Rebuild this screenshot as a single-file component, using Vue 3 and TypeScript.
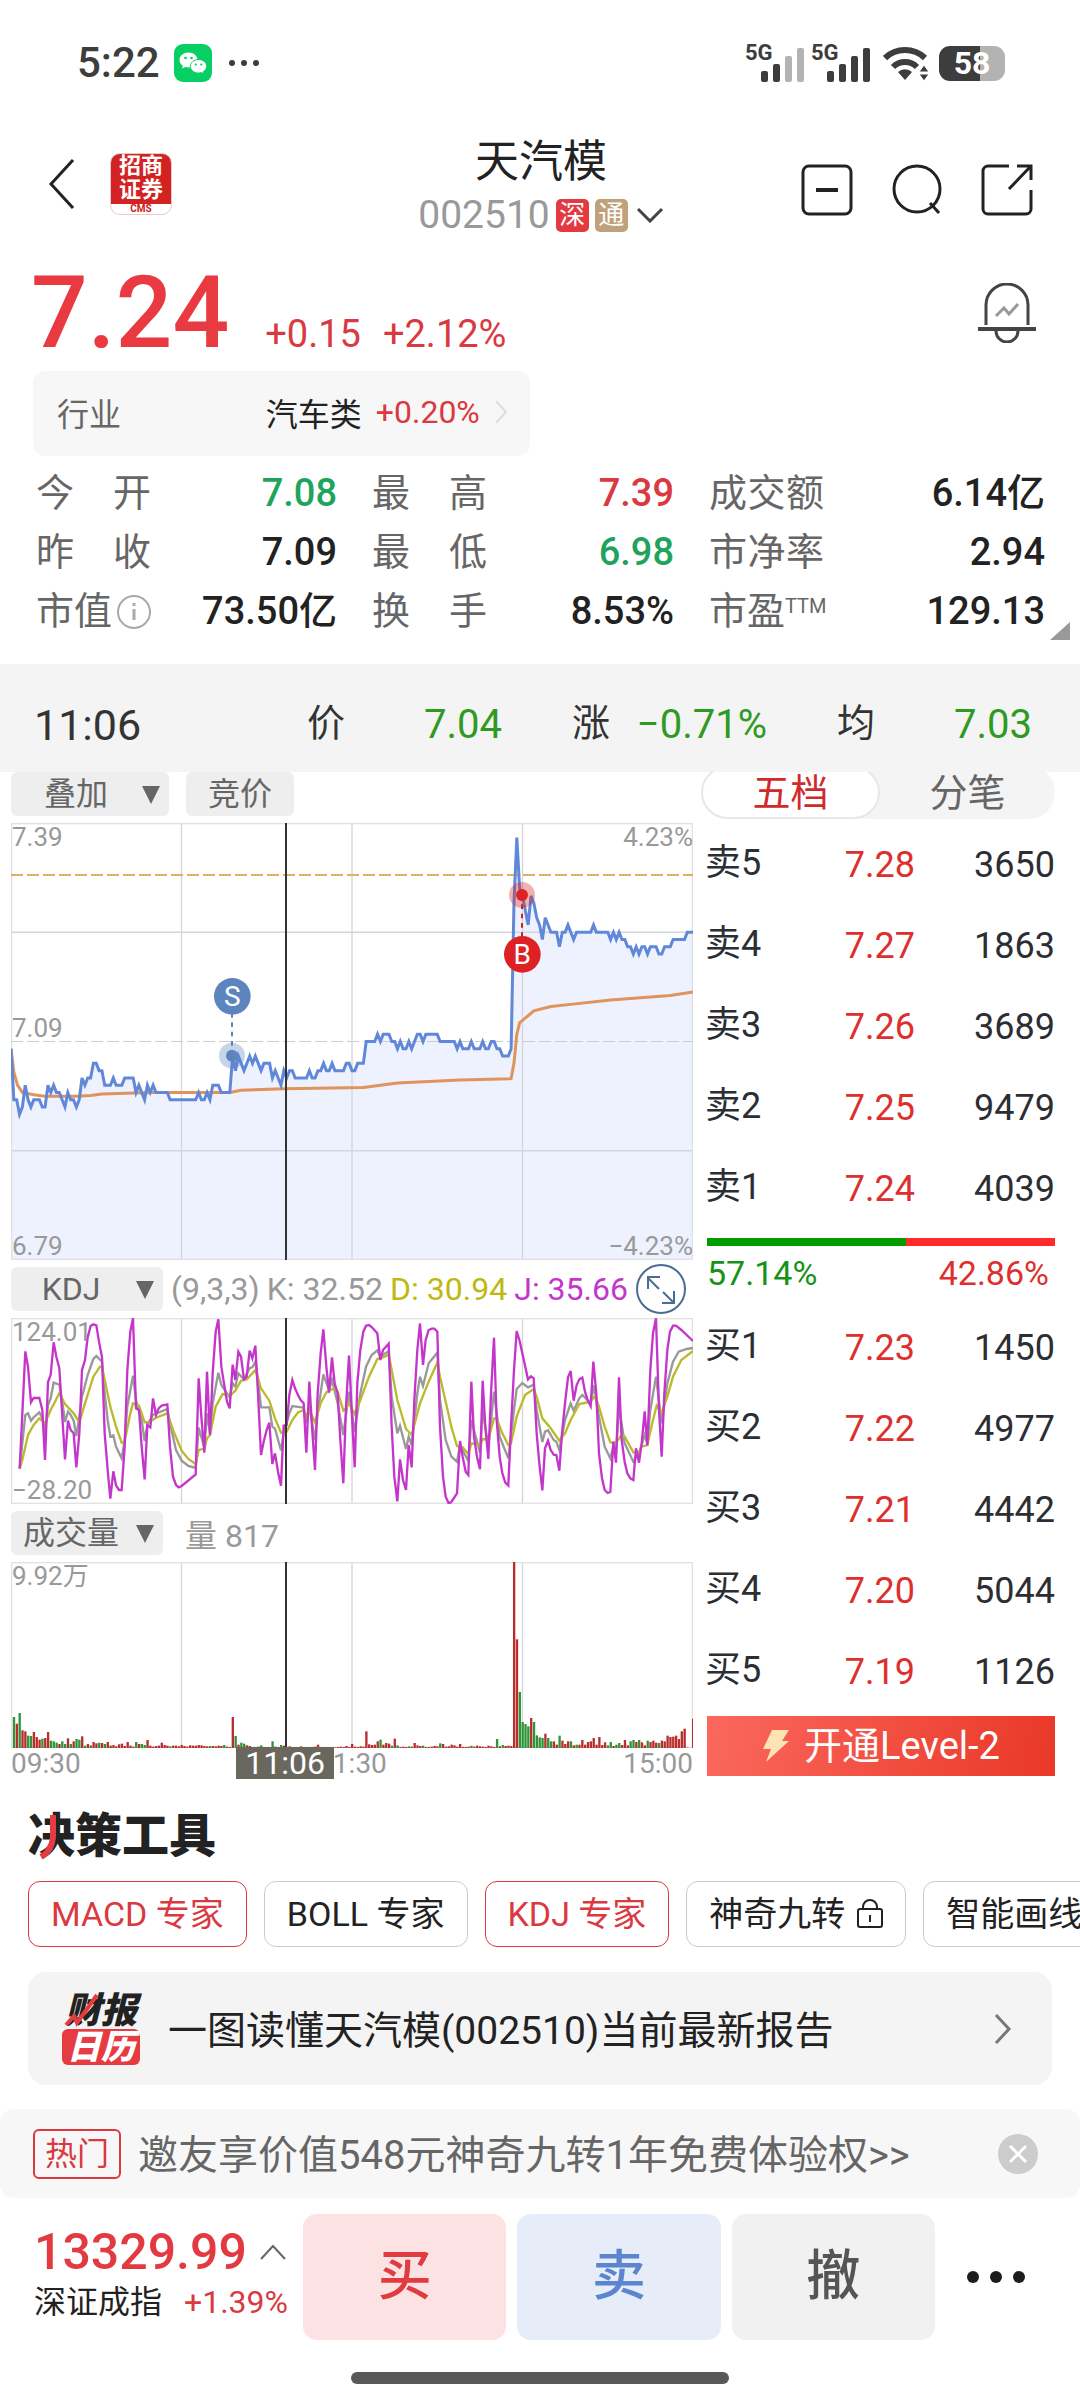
<script setup lang="ts">
import { computed, ref } from 'vue'

type Tone = 'up' | 'down' | 'plain'
interface Stat { label: string; value: string; tone: Tone; info?: boolean; sup?: string }
interface Level { side: string; price: string; qty: number }
interface Tool { name: string; active?: boolean; locked?: boolean }

const stats: Stat[] = [
  { label: '今开', value: '7.08', tone: 'down' },
  { label: '最高', value: '7.39', tone: 'up' },
  { label: '成交额', value: '6.14亿', tone: 'plain' },
  { label: '昨收', value: '7.09', tone: 'plain' },
  { label: '最低', value: '6.98', tone: 'down' },
  { label: '市净率', value: '2.94', tone: 'plain' },
  { label: '市值', value: '73.50亿', tone: 'plain', info: true },
  { label: '换手', value: '8.53%', tone: 'plain' },
  { label: '市盈', value: '129.13', tone: 'plain', sup: 'TTM' },
]

const readout = [
  { label: '价', value: '7.04' },
  { label: '涨', value: '−0.71%' },
  { label: '均', value: '7.03' },
]

const asks: Level[] = [
  { side: '卖5', price: '7.28', qty: 3650 },
  { side: '卖4', price: '7.27', qty: 1863 },
  { side: '卖3', price: '7.26', qty: 3689 },
  { side: '卖2', price: '7.25', qty: 9479 },
  { side: '卖1', price: '7.24', qty: 4039 },
]
const bids: Level[] = [
  { side: '买1', price: '7.23', qty: 1450 },
  { side: '买2', price: '7.22', qty: 4977 },
  { side: '买3', price: '7.21', qty: 4442 },
  { side: '买4', price: '7.20', qty: 5044 },
  { side: '买5', price: '7.19', qty: 1126 },
]
const sellShare = 57.14

const tools: Tool[] = [
  { name: 'MACD 专家', active: true },
  { name: 'BOLL 专家' },
  { name: 'KDJ 专家', active: true },
  { name: '神奇九转', locked: true },
  { name: '智能画线' },
]

const bookTab = ref<'five' | 'ticks'>('five')

/* Chart geometry: 240 trading minutes across, prices 6.79 to 7.39 */
const W = 2046
const H = 1311
const SUB = 558
const crossX = 825
const minuteX = (m: number) => (m / 240) * W
const centY = (c: number) => ((739 - c) / 60) * H

/* Minute prices, in cents above 7.00 */
const price = [
  8, 1, 1, -1, 0, 3, 1, 0, 1, 1, 1, 0, 0, 3, 2, 3, 2, 2, 1, 0, 2, 1, 1, 0, 1, 4, 3, 4, 4, 6,
  6, 5, 5, 3, 3, 3, 4, 3, 3, 3, 4, 4, 4, 4, 2, 3, 2, 1, 3, 2, 3, 2, 2, 2, 2, 2, 1, 1, 1, 1,
  1, 1, 1, 1, 1, 1, 2, 1, 1, 2, 1, 3, 3, 3, 2, 2, 2, 2, 7, 5, 7, 6, 5, 6, 7, 6, 7, 6, 5, 6,
  6, 6, 4, 5, 4, 3, 5, 4, 5, 5, 4, 4, 4, 4, 4, 5, 4, 4, 5, 5, 6, 5, 5, 6, 5, 5, 5, 5, 6, 6,
  5, 5, 6, 6, 6, 9, 9, 9, 9, 10, 9, 10, 10, 10, 9, 9, 8, 9, 8, 8, 9, 8, 9, 10, 10, 9, 10, 10, 10, 10,
  10, 9, 9, 9, 9, 9, 9, 8, 9, 8, 8, 8, 9, 8, 8, 8, 9, 8, 8, 9, 9, 8, 8, 7, 7, 7, 8, 28, 37, 30,
  29, 27, 25, 29, 28, 26, 25, 23, 26, 25, 24, 24, 24, 22, 24, 24, 25, 24, 23, 24, 24, 24, 24, 24, 24, 25, 24, 24, 24, 24,
  24, 23, 24, 23, 24, 23, 23, 22, 22, 21, 22, 21, 22, 22, 21, 22, 22, 22, 21, 21, 22, 22, 22, 23, 23, 23, 23, 23, 24, 24, 24,
]
const pricePoints = computed(() =>
  price.map((c, m) => `${minuteX(m).toFixed(1)},${centY(700 + c).toFixed(1)}`).join(' '))
const priceArea = computed(() => `0,${H} ${pricePoints.value} ${W},${H}`)

const average: [number, number][] = [
  [0, 708], [1, 704.8], [2.3, 703], [4, 702], [8, 701.7], [12, 701.5], [23, 701.5], [28, 701.6], [32, 701.8],
  [49, 702], [77, 702], [81, 702.3], [96, 702.5], [124, 702.7], [136, 703.3], [158, 703.7], [176, 703.9],
  [177, 706], [178, 710], [179, 711.6], [180, 711.9], [184, 713.2], [190, 713.8], [197, 714.1], [211, 714.7],
  [225, 715.1], [232, 715.3], [240, 715.8],
]
const averagePoints = average.map(([m, c]) => `${minuteX(m).toFixed(1)},${centY(c).toFixed(1)}`).join(' ')

const jLine = '59,626 76,274 84,320 93,427 101,414 118,414 127,450 135,600 144,366 152,345 161,247 169,290 178,325 195,598 204,482 212,510 221,520 229,622 238,520 246,330 255,300 263,232 272,198 280,193 289,196 297,245 306,292 314,520 323,630 331,716 340,634 348,676 357,690 365,690 374,560 382,330 391,215 399,174 408,445 417,450 425,560 434,658 442,495 451,502 459,415 468,465 476,445 485,437 502,433 510,560 519,650 528,675 536,682 545,678 587,643 596,355 604,470 613,578 621,335 630,525 638,340 647,215 655,178 664,320 672,370 681,425 689,445 698,314 706,360 715,275 723,290 732,358 740,350 749,272 757,295 766,257 774,400 783,585 791,545 800,510 808,488 817,612 825,580 834,635 843,677 851,497 860,495 868,405 877,360 885,385 894,405 902,420 911,430 919,578 928,365 936,500 945,630 953,400 962,280 970,208 979,320 987,398 996,292 1004,370 1013,400 1021,540 1030,670 1038,440 1047,287 1056,470 1064,622 1072,370 1081,270 1090,215 1098,197 1107,195 1115,201 1132,220 1141,300 1149,270 1166,251 1175,500 1183,650 1192,724 1200,598 1209,660 1218,690 1226,555 1235,622 1243,420 1252,270 1260,190 1269,315 1277,240 1286,210 1295,206 1303,206 1312,215 1320,500 1329,650 1337,710 1346,730 1354,726 1371,700 1380,543 1388,590 1397,635 1405,645 1414,365 1422,530 1431,590 1440,628 1448,362 1456,500 1465,597 1473,400 1482,233 1490,480 1499,590 1507,640 1516,668 1525,677 1533,500 1542,330 1550,213 1559,243 1584,358 1593,349 1601,355 1610,520 1618,610 1627,691 1635,565 1644,542 1652,570 1661,584 1669,585 1678,632 1686,520 1695,430 1704,352 1712,333 1721,422 1730,375 1738,358 1747,353 1755,395 1763,420 1772,438 1780,305 1789,400 1797,580 1806,655 1814,690 1823,699 1831,696 1840,545 1848,608 1857,352 1865,540 1874,605 1882,640 1891,655 1900,660 1908,565 1917,608 1925,550 1934,454 1942,556 1951,330 1959,220 1968,175 1977,450 1985,590 1993,400 2002,270 2010,215 2019,197 2028,197 2044,210 2079,243'
const kLine = '59,626 67,550 76,465 84,460 93,482 101,472 118,457 127,475 135,520 144,435 152,415 161,368 178,374 186,420 195,486 204,455 212,465 221,482 229,528 238,470 246,410 263,345 280,297 289,288 306,305 314,400 323,480 331,530 340,526 348,560 365,595 374,540 382,440 399,347 408,420 425,480 434,543 442,495 459,465 502,447 510,490 528,570 545,602 565,618 587,624 596,503 613,562 621,460 630,520 638,430 655,338 664,375 689,412 698,370 706,380 715,340 732,358 749,324 757,322 766,305 774,360 783,442 808,442 817,500 825,506 843,571 851,520 868,460 877,438 911,443 919,490 928,440 945,540 953,460 970,343 987,390 996,360 1013,430 1030,525 1047,395 1064,515 1081,400 1098,320 1115,285 1132,271 1141,290 1166,273 1175,410 1192,520 1200,497 1218,567 1226,530 1235,555 1252,400 1260,350 1269,378 1286,310 1312,278 1320,420 1337,540 1354,590 1371,605 1380,556 1405,603 1414,480 1440,578 1448,450 1465,560 1482,395 1499,530 1525,595 1542,450 1550,387 1567,369 1584,382 1601,374 1610,450 1627,546 1635,515 1644,511 1661,540 1669,545 1678,570 1695,480 1712,430 1721,452 1738,415 1747,405 1772,430 1780,375 1797,470 1814,560 1831,595 1840,560 1848,580 1857,440 1874,550 1900,605 1917,580 1934,525 1942,550 1951,450 1968,350 1985,490 2002,370 2019,305 2036,275 2060,267 2079,264'
const dLine = '59,626 67,600 76,560 84,525 101,495 118,475 135,490 152,450 178,400 195,432 221,460 238,487 255,430 280,350 300,320 306,320 331,440 348,500 365,548 374,545 391,460 399,430 417,437 434,487 451,485 468,473 502,460 519,510 545,572 565,597 587,612 596,570 604,568 613,567 621,535 630,525 647,440 668,402 689,408 706,392 723,362 740,358 766,330 783,385 808,422 825,475 843,518 860,515 877,480 894,457 911,450 919,468 928,450 945,487 962,430 979,397 1004,384 1013,395 1030,452 1038,445 1047,430 1064,462 1081,420 1107,350 1132,297 1149,292 1166,284 1175,330 1192,420 1218,507 1235,525 1260,430 1286,365 1312,308 1320,350 1354,500 1371,558 1388,562 1405,582 1414,550 1431,553 1440,560 1448,537 1465,538 1482,475 1490,475 1507,520 1525,555 1533,550 1550,470 1575,405 1601,387 1610,410 1627,475 1652,505 1678,542 1695,520 1712,480 1738,432 1772,425 1785,407 1797,440 1814,500 1831,547 1848,548 1865,525 1874,530 1900,577 1917,577 1925,560 1942,555 1959,480 1970,437 1985,458 2002,410 2019,350 2044,300 2079,273'

/* Minute volumes: positive bars rise (red), negative bars fall (green) */
const volume = [
  0, -93, 73, -105, 53, 50, -37, -36, 48, 33, 25, -28, 30, 48, -22, -20, -16, 12, -20, -12, 29, -12, 20, -27, -25, 35, -7, 12, -8, 18, 14, -16, 15, -12, 18, 7,
  9, 5, 11, 13, 6, 18, 7, 4, -18, 12, -12, -9, 24, 7, 4, 6, 7, 16, 9, 7, -5, 7, 7, 5, 9, 6, 4, 8, 7, 7, 9, 8, 6, 5, -6, 6, 5, 7, 6, -9, 4, 3,
  93, -36, 10, -16, -13, 8, 6, 3, -3, 4, -8, 3, 2, 3, -20, 4, 3, -9, 7, -3, 5, 2, 3, 2, 5, 2, 2, 3, 2, 4,
  10, 2, -3, 2, 2, -2, 2, 3, 4, 3, 6, 3, 12, 4, 3, 5, 4, 50, 11, 9, 10, 20, -25, 10, 15, 13, -7, 28, -8, 3, 4, 3, -5, 4,
  15, 8, 6, -7, 3, 3, 4, 6, 5, -14, 12, 4, 5, 10, 8, 4, 12, 3, 3, 4, -7, 4, 7, 5, 4, 3, 7, 5, 3, -27, 5, -9, 6, 7, 6,
  558, 326, -168, -78, -72, -65, 90, -78, -38, -32, -30, 43, -30, -20, 20, 10, -37, 22, 12, 20, -20, 8, -10, 10, 24, 10, 18, 20, 30, 10,
  33, 9, 17, -8, -18, 6, -10, -15, 9, 24, 8, -20, -24, 18, -24, 17, 8, -22, 18, 22, 16, -15, 22, 20, 37, 33, 34, 37, 27, 50, 58, 1, 0, 88,
]
const gridX = [W / 4, W / 2, (W * 3) / 4]
const gridY = [H / 4, (H * 3) / 4]
</script>

<template>
  <div class="page">
    <div class="status">
      <div class="status-left">
        <span class="clock">5:22</span>
        <svg class="wechat" viewBox="0 0 38 38" aria-hidden="true">
          <rect width="38" height="38" rx="9" fill="#07cf64" />
          <path d="M14.500 8.500c-5 0-9 3.300-9 7.500 0 2.300 1.300 4.400 3.300 5.800l-.8 2.700 3.200-1.600c1 .3 2.100.5 3.300.5 5 0 9-3.300 9-7.400s-4-7.500-9-7.500z" fill="#fff" />
          <path d="M24.500 15.500c-4.500 0-8.200 3-8.200 6.800s3.700 6.800 8.200 6.800c1 0 2-.2 2.900-.5l2.700 1.400-.7-2.400c2-1.200 3.300-3.100 3.300-5.300 0-3.800-3.700-6.800-8.200-6.800z" fill="#fff" stroke="#07cf64" />
          <g fill="#07cf64"><circle cx="11.500" cy="14" r="1.300" /><circle cx="17.500" cy="14" r="1.300" /><circle cx="21.800" cy="20.500" r="1.100" /><circle cx="27.200" cy="20.500" r="1.100" /></g>
        </svg>
        <svg class="mini-dots" viewBox="0 0 32 8" aria-hidden="true"><g fill="#3d3d3d"><circle cx="4" cy="4" r="3" /><circle cx="16" cy="4" r="3" /><circle cx="28" cy="4" r="3" /></g></svg>
      </div>
      <div class="status-right">
        <div class="signal">
          <span>5G</span>
          <svg viewBox="0 0 44 36" aria-hidden="true"><g fill="#3d3d3d"><rect y="24" width="7" height="11" rx="2" /><rect x="12" y="17" width="7" height="18" rx="2" /></g><g fill="#b3b3b3"><rect x="24" y="9" width="7" height="26" rx="2" /><rect x="36" y="1" width="7" height="34" rx="2" /></g></svg>
        </div>
        <div class="signal">
          <span>5G</span>
          <svg viewBox="0 0 44 36" aria-hidden="true"><g fill="#3d3d3d"><rect y="24" width="7" height="11" rx="2" /><rect x="12" y="17" width="7" height="18" rx="2" /><rect x="24" y="9" width="7" height="26" rx="2" /><rect x="36" y="1" width="7" height="34" rx="2" /></g></svg>
        </div>
        <svg class="wifi" viewBox="0 0 46 36" aria-hidden="true">
          <g fill="none" stroke="#3d3d3d" stroke-width="6"><path d="M2 13a29 29 0 0 1 40 0" /><path d="M10 22a17 17 0 0 1 24 0" /></g>
          <path d="M15 27a10 10 0 0 1 14 0l-7 8z" fill="#3d3d3d" />
          <path d="M41 20l5 7h-10zM41 36l5-7h-10z" fill="#3d3d3d" stroke="#fff" stroke-width="1" />
        </svg>
        <div class="battery"><span>58</span></div>
      </div>
    </div>

    <header class="header">
      <div class="head-left">
        <button class="icon-btn" aria-label="返回">
          <svg class="back" viewBox="0 0 26 50"><path d="M24 1 2 25l22 24" fill="none" stroke="#222" stroke-width="3" /></svg>
        </button>
        <div class="broker"><b>招商</b><b>证券</b><i>CMS</i></div>
      </div>
      <div class="head-mid">
        <h1>天汽模</h1>
        <div class="code">
          <span>002510</span>
          <em class="tag red">深</em>
          <em class="tag tan">通</em>
          <svg viewBox="0 0 28 16" aria-hidden="true"><path d="M2 2l12 12L26 2" fill="none" stroke="#444" stroke-width="3" /></svg>
        </div>
      </div>
      <div class="head-right">
        <button class="icon-btn" aria-label="移除自选">
          <svg viewBox="0 0 52 52"><rect x="2" y="2" width="48" height="48" rx="6" fill="none" stroke="#222" stroke-width="3" /><path d="M15 26h22" stroke="#222" stroke-width="4" /></svg>
        </button>
        <button class="icon-btn" aria-label="搜索">
          <svg viewBox="0 0 52 52"><circle cx="26" cy="25" r="23" fill="none" stroke="#222" stroke-width="3" /><path d="M39 39l9 10" stroke="#222" stroke-width="3" /></svg>
        </button>
        <button class="icon-btn" aria-label="分享">
          <svg viewBox="0 0 52 52"><g fill="none" stroke="#222" stroke-width="3"><path d="M28 2H7a5 5 0 0 0-5 5v38a5 5 0 0 0 5 5h38a5 5 0 0 0 5-5V26" /><path d="M36 2h14v14M50 2 28 25" /></g></svg>
        </button>
      </div>
    </header>

    <section class="quote">
      <strong>7.24</strong>
      <span>+0.15</span>
      <span>+2.12%</span>
      <button class="icon-btn bell" aria-label="股价提醒">
        <svg viewBox="0 0 58 60"><g fill="none" stroke="#444" stroke-width="3"><path d="M8 42V22a21 21 0 0 1 42 0v20" /><path d="M0 46h58" stroke-width="4" /><path d="M18 48a11 11 0 0 0 22 0" /></g><path d="M18 33l8-8 5 6 9-10" fill="none" stroke="#999" stroke-width="3" /></svg>
      </button>
    </section>

    <a class="industry" href="#industry">
      <span class="ind-label">行业</span>
      <span class="ind-name">汽车类</span>
      <span class="ind-chg">+0.20%</span>
      <svg viewBox="0 0 14 26" aria-hidden="true"><path d="M2 2l10 11L2 24" fill="none" stroke="#ddd" stroke-width="2" /></svg>
    </a>

    <dl class="stats">
      <div v-for="s in stats" :key="s.label">
        <dt :class="{ packed: s.info || s.sup }">
          <template v-if="s.info || s.sup">{{ s.label }}</template>
          <template v-else><span v-for="ch in s.label" :key="ch">{{ ch }}</span></template>
          <svg v-if="s.info" viewBox="0 0 36 36" aria-hidden="true"><circle cx="18" cy="18" r="16" fill="none" stroke="#aaa" stroke-width="2" /><path d="M18 15v11M18 9v3" stroke="#aaa" stroke-width="3" /></svg>
          <sup v-if="s.sup">{{ s.sup }}</sup>
        </dt>
        <dd :class="s.tone">{{ s.value }}</dd>
      </div>
    </dl>

    <div class="readout">
      <time>11:06</time>
      <div v-for="r in readout" :key="r.label"><span>{{ r.label }}</span><b>{{ r.value }}</b></div>
    </div>

    <main class="board">
      <div class="charts">
        <div class="bar">
          <label class="pick wide">
            <select aria-label="叠加"><option>叠加</option></select>
            <svg viewBox="0 0 18 18" aria-hidden="true"><path d="M0 0h18L9 18z" fill="#666" /></svg>
          </label>
          <button class="chip">竞价</button>
        </div>
        <div class="plot">
          <svg :viewBox="`0 0 ${W} ${H}`" role="img" aria-label="分时走势">
            <polygon :points="priceArea" fill="#eef2fe" />
            <g stroke="#d3d5dc" stroke-width="4">
              <path v-for="x in gridX" :key="x" :d="`M${x} 0V${H}`" />
              <path v-for="y in gridY" :key="y" :d="`M0 ${y}H${W}`" />
            </g>
            <rect x="2" y="2" :width="W - 4" :height="H - 4" fill="none" stroke="#dfe1e6" stroke-width="4" />
            <path :d="`M0 ${H / 2}H${W}`" stroke="#ccc" stroke-width="3" stroke-dasharray="36 12" />
            <path :d="`M0 156H${W}`" stroke="#e2b062" stroke-width="6" stroke-dasharray="36 12" />
            <polyline :points="averagePoints" fill="none" stroke="#e0935a" stroke-width="9" />
            <polyline :points="pricePoints" fill="none" stroke="#6188d8" stroke-width="9" />
            <path :d="`M${crossX} 0V${H}`" stroke="#333" stroke-width="6" />
            <g>
              <path d="M663 570V698" stroke="#5c85c0" stroke-width="6" stroke-dasharray="14 14" />
              <circle cx="663" cy="698" r="39" fill="#5c85c0" fill-opacity=".35" />
              <circle cx="663" cy="698" r="18" fill="#5c85c0" />
              <circle cx="664" cy="520" r="55" fill="#5c85c0" />
              <text x="664" y="550" class="mark">S</text>
            </g>
            <g>
              <path d="M1533 216V345" stroke="#c22" stroke-width="6" stroke-dasharray="14 14" />
              <circle cx="1533" cy="216" r="39" fill="#de2123" fill-opacity=".35" />
              <circle cx="1533" cy="216" r="18" fill="#de2123" />
              <circle cx="1534" cy="394" r="55" fill="#de2123" />
              <text x="1534" y="424" class="mark">B</text>
            </g>
          </svg>
          <span class="tick tl">7.39</span>
          <span class="tick tr">4.23%</span>
          <span class="tick ml">7.09</span>
          <span class="tick bl">6.79</span>
          <span class="tick br">−4.23%</span>
        </div>

        <div class="bar kdj">
          <label class="pick">
            <select aria-label="指标"><option>KDJ</option></select>
            <svg viewBox="0 0 18 18" aria-hidden="true"><path d="M0 0h18L9 18z" fill="#666" /></svg>
          </label>
          <p><span>(9,3,3)</span><span>K: 32.52</span><span class="d">D: 30.94</span><span class="j">J: 35.66</span></p>
          <button class="icon-btn expand" aria-label="全屏">
            <svg viewBox="0 0 50 50"><g fill="none" stroke="#4a6d94" stroke-width="2"><circle cx="25" cy="25" r="24" /><path d="M23 25 12 14M12 25V13h12M27 28l11 11M38 27v12H26" /></g></svg>
          </button>
        </div>
        <div class="plot">
          <svg :viewBox="`33 174 ${W} ${SUB}`" role="img" aria-label="KDJ">
            <g stroke="#d3d5dc" stroke-width="4"><path v-for="x in gridX" :key="x" :d="`M${x + 33} 174v558`" /></g>
            <rect x="35" y="176" :width="W - 4" :height="SUB - 4" fill="none" stroke="#e2e2e2" stroke-width="4" />
            <g fill="none" stroke-width="7">
              <polyline :points="kLine" stroke="#999" />
              <polyline :points="dLine" stroke="#bcb92c" />
              <polyline :points="jLine" stroke="#c436cb" />
            </g>
            <path :d="`M${crossX + 33} 174v558`" stroke="#333" stroke-width="6" />
          </svg>
          <span class="tick tl">124.01</span>
          <span class="tick bl">−28.20</span>
        </div>

        <div class="bar">
          <label class="pick">
            <select aria-label="副图"><option>成交量</option></select>
            <svg viewBox="0 0 18 18" aria-hidden="true"><path d="M0 0h18L9 18z" fill="#666" /></svg>
          </label>
          <p class="vol">量 817</p>
        </div>
        <div class="plot">
          <svg :viewBox="`0 0 ${W} ${SUB}`" role="img" aria-label="成交量">
            <g stroke="#d3d5dc" stroke-width="4"><path v-for="x in gridX" :key="x" :d="`M${x} 0V${SUB}`" /></g>
            <rect x="2" y="2" :width="W - 4" :height="SUB - 4" fill="none" stroke="#e2e2e2" stroke-width="4" />
            <rect
              v-for="(v, m) in volume" :key="m"
              :x="minuteX(m) - 3" :y="SUB - Math.abs(v)" width="7" :height="Math.abs(v)"
              :fill="v > 0 ? '#b92d2d' : '#2f9438'"
            />
            <path :d="`M${crossX} 0V${SUB}`" stroke="#333" stroke-width="6" />
          </svg>
          <span class="tick tl">9.92万</span>
        </div>
        <div class="axis">
          <span>09:30</span><span>11:30</span><span>15:00</span>
          <time>11:06</time>
        </div>
      </div>

      <aside class="book">
        <div class="tabs">
          <button :class="{ on: bookTab === 'five' }" @click="bookTab = 'five'">五档</button>
          <button :class="{ on: bookTab === 'ticks' }" @click="bookTab = 'ticks'">分笔</button>
        </div>
        <table>
          <tbody><tr v-for="l in asks" :key="l.side"><th scope="row">{{ l.side }}</th><td class="px">{{ l.price }}</td><td>{{ l.qty }}</td></tr></tbody>
        </table>
        <div class="ratio"><i :style="{ width: sellShare + '%' }"></i></div>
        <div class="shares"><span>57.14%</span><span>42.86%</span></div>
        <table>
          <tbody><tr v-for="l in bids" :key="l.side"><th scope="row">{{ l.side }}</th><td class="px">{{ l.price }}</td><td>{{ l.qty }}</td></tr></tbody>
        </table>
        <button class="level2">
          <svg viewBox="0 0 28 32" aria-hidden="true"><path d="M10 0h17l-7 11h7L4 32l5-13H1z" fill="#ffe3b5" /></svg>
          开通Level-2
        </button>
      </aside>
    </main>

    <section class="decide">
      <h2>决策工具
        <svg viewBox="0 0 18 44" aria-hidden="true"><path d="M15 0v22Q14 36 3 42" fill="none" stroke="#e63c41" stroke-width="6" /></svg>
      </h2>
      <div class="tools">
        <button v-for="t in tools" :key="t.name" :class="{ on: t.active }">
          {{ t.name }}
          <svg v-if="t.locked" viewBox="0 0 26 30" aria-hidden="true"><g fill="none" stroke="#222" stroke-width="2"><rect x="1" y="10" width="24" height="18" rx="2" /><path d="M6 10V8a7 7 0 0 1 14 0v2M13 16v7" /></g></svg>
        </button>
      </div>
      <a class="report" href="#report">
        <span class="cal"><b>财报</b><i>日历</i>
          <svg viewBox="0 0 40 36" aria-hidden="true"><path d="M2 32l8-9 3 7L33 2" fill="none" stroke="#e63c41" stroke-width="4" /></svg>
        </span>
        <span class="report-text">一图读懂天汽模(002510)当前最新报告</span>
        <svg class="go" viewBox="0 0 18 32" aria-hidden="true"><path d="M2 2l13 14L2 30" fill="none" stroke="#777" stroke-width="3" /></svg>
      </a>
    </section>

    <div class="promo">
      <em>热门</em>
      <a href="#promo">邀友享价值548元神奇九转1年免费体验权&gt;&gt;</a>
      <button class="icon-btn" aria-label="关闭">
        <svg viewBox="0 0 40 40"><circle cx="20" cy="20" r="20" fill="#ccc" /><path d="M12 12l16 16M28 12 12 28" stroke="#fff" stroke-width="3" /></svg>
      </button>
    </div>

    <footer class="actions">
      <div class="index">
        <div class="idx-top"><strong>13329.99</strong><svg viewBox="0 0 26 16" aria-hidden="true"><path d="M1 15 13 2l12 13" fill="none" stroke="#666" stroke-width="2" /></svg></div>
        <div class="idx-sub"><span>深证成指</span><span class="up">+1.39%</span></div>
      </div>
      <button class="act buy">买</button>
      <button class="act sell">卖</button>
      <button class="act undo">撤</button>
      <button class="icon-btn more" aria-label="更多">
        <svg viewBox="0 0 58 14"><g fill="#1d1d1d"><circle cx="6" cy="7" r="6" /><circle cx="29" cy="7" r="6" /><circle cx="52" cy="7" r="6" /></g></svg>
      </button>
    </footer>
    <div class="home"></div>
  </div>
</template>

<style>
body { margin: 0; background: #fff; }
</style>

<style scoped>
.page { font-family: Roboto, "Noto Sans CJK SC", sans-serif; color: #222; background: #fff; overflow: hidden; }
.page *, .page *::before { box-sizing: border-box; }
button, select { font-family: inherit; border: 0; background: none; padding: 0; margin: 0; color: inherit; }
a { color: inherit; text-decoration: none; }
svg { display: block; flex: none; }
em, i { font-style: normal; }
.up { color: #d9393f; }
.down { color: #1ea45c; }
.icon-btn { display: block; flex: none; }

.status { height: 126px; padding: 0 75px 0 77px; display: flex; justify-content: space-between; align-items: center; }
.status-left, .status-right { display: flex; align-items: center; }
.clock { font-size: 42px; font-weight: 500; color: #3d3d3d; line-height: 48px; }
.wechat { width: 38px; margin-left: 14px; }
.mini-dots { width: 32px; margin-left: 16px; }
.signal { display: flex; align-items: flex-start; height: 40px; margin-right: 6px; color: #3d3d3d; }
.signal span { font-size: 22px; font-weight: 700; line-height: 20px; width: 16px; }
.signal svg { width: 44px; margin-top: 4px; }
.wifi { width: 46px; margin: 0 10px 0 6px; }
.battery { width: 66px; height: 35px; border-radius: 11px; background: linear-gradient(90deg, #3d3d3d 62%, #b3b3b3 62%); color: #fff; font-size: 32px; font-weight: 700; line-height: 35px; text-align: center; }

.header { height: 128px; display: grid; grid-template-columns: 1fr auto 1fr; align-items: center; padding: 0 47px 0 49px; }
.head-left { display: flex; align-items: center; gap: 35px; padding-bottom: 12px; }
.back { width: 26px; }
.broker { width: 62px; height: 62px; border-radius: 10px; background: linear-gradient(#d32222 84%, #fff 84%); border: 1px solid #e9c9c9; display: flex; flex-direction: column; align-items: center; }
.broker b { color: #fff; font-size: 22px; line-height: 24px; font-weight: 700; }
.broker i { color: #c22; font-size: 10px; line-height: 13px; font-weight: 700; }
.head-mid { text-align: center; }
h1 { margin: 0; font-size: 44px; line-height: 50px; font-weight: 400; }
.code { display: flex; align-items: center; gap: 6px; font-size: 39px; line-height: 56px; color: #999; }
.code svg { width: 28px; margin-left: 2px; }
.tag { width: 33px; height: 33px; border-radius: 5px; color: #fff; font-size: 26px; line-height: 33px; text-align: center; }
.red { background: #e23a40; }
.tan { background: #bfa27c; }
.head-right { display: flex; justify-content: flex-end; gap: 38px; }
.head-right svg { width: 52px; }

.quote { display: flex; align-items: baseline; height: 117px; padding: 0 44px 0 31px; color: #d9393f; }
.quote strong { font-size: 100px; line-height: 117px; font-weight: 500; color: #e83a40; margin-right: 36px; }
.quote span { font-size: 38px; margin-right: 22px; }
.bell { margin-left: auto; align-self: center; }
.bell svg { width: 58px; }

.industry { display: flex; align-items: center; width: 46%; height: 85px; margin-left: 33px; padding: 0 22px 4px 24px; background: #f7f7f7; border-radius: 12px; font-size: 32px; }
.ind-label { color: #666; margin-right: auto; }
.ind-name { margin-right: 14px; }
.ind-chg { color: #d9393f; margin-right: 14px; }
.industry svg { width: 14px; }

.stats { position: relative; margin: 8px 0 0; padding: 0 35px 23px 36px; display: grid; grid-template-columns: 301fr 302fr 336fr; column-gap: 35px; }
.stats::before { content: ""; position: absolute; right: 10px; bottom: 24px; border-left: 20px solid transparent; border-bottom: 18px solid #999; }
.stats div { display: flex; justify-content: space-between; align-items: center; height: 59px; font-size: 38px; line-height: 59px; }
.stats dt { display: flex; justify-content: space-between; width: 115px; color: #666; white-space: nowrap; }
.stats dt.packed { justify-content: flex-start; align-items: center; }
.stats dt svg { width: 36px; margin-left: 4px; }
.stats sup { font-size: 20px; line-height: 24px; align-self: flex-start; margin-top: 12px; }
.stats dd { margin: 0; font-weight: 500; white-space: nowrap; }

.readout { position: relative; z-index: 1; display: flex; gap: 70px; align-items: center; height: 108px; padding: 14px 48px 0 34px; background: linear-gradient(#f1f3f5 14px, #f4f4f4 14px); font-size: 38px; color: #333; }
.readout time { flex: 1; font-size: 43px; }
.readout div { flex: none; width: 195px; display: flex; justify-content: space-between; align-items: center; line-height: 48px; }
.readout span { padding-bottom: 4px; }
.readout b { font-size: 40px; font-weight: 400; color: #2f9a22; }

.board { display: grid; grid-template-columns: minmax(0, 682fr) minmax(0, 354fr); gap: 8px; padding: 0 25px 0 11px; }
.bar { display: flex; align-items: center; height: 44px; margin: 7px 0; color: #999; font-size: 32px; }
.bar:first-child { margin-top: 0; }
.bar p { margin: 0; }
.pick { position: relative; width: 152px; height: 44px; }
.pick.wide { width: 158px; }
.pick select { appearance: none; width: 100%; height: 44px; padding: 0 42px 0 14px; border-radius: 6px; background: #eee; color: #666; font-size: 32px; text-align: center; text-align-last: center; }
.pick:not(.wide) select { padding-left: 10px; }
.pick svg { position: absolute; right: 9px; top: 14px; width: 18px; pointer-events: none; }
.chip { height: 44px; width: 108px; margin-left: 17px; border-radius: 6px; background: #eee; color: #666; font-size: 32px; line-height: 44px; }
.kdj p { flex: 1; display: flex; justify-content: space-between; margin: 0 8px; white-space: nowrap; }
.d { color: #bdb911; }
.j { color: #c436cb; }
.expand svg { width: 50px; }
.kdj .expand { margin-right: 7px; }
.bar .vol { margin-left: 22px; }
.plot { position: relative; }
.plot > svg { width: 100%; height: auto; }
.mark { fill: #fff; font-size: 84px; text-anchor: middle; }
.tick { position: absolute; font-size: 26px; line-height: 28px; color: #999; }
.tl { left: 1px; top: 0; }
.tr { right: 0; top: 0; }
.ml { left: 1px; bottom: 50%; }
.bl { left: 1px; bottom: 0; }
.br { right: 0; bottom: 0; }
.axis { position: relative; display: flex; justify-content: space-between; font-size: 28px; line-height: 32px; color: #999; }
.axis time { position: absolute; left: 33%; top: -1px; width: 98px; text-align: center; font-size: 32px; line-height: 32px; color: #fff; background: #6a675f; }

.tabs { display: flex; height: 53px; margin: -6px 0 5px; border-radius: 27px; background: #f4f4f4; }
.tabs button { flex: 1; border-radius: 27px; font-size: 38px; line-height: 50px; color: #666; }
.tabs .on { background: #fff; border: 2px solid #e8e8e8; color: #d02b2b; }
table { width: 100%; border-collapse: collapse; table-layout: fixed; font-size: 36px; line-height: 44px; color: #2b2e33; }
tr { height: 81px; }
th, td { padding: 0; font-weight: 400; text-align: right; vertical-align: middle; }
th { text-align: left; padding: 0 0 4px 4px; }
td.px { color: #de2f2f; padding-right: 22px; }
.ratio { height: 8px; margin: 9px 0 0 6px; background: #ff2a2a; }
.ratio i { display: block; height: 8px; background: #009c00; }
.shares { display: flex; justify-content: space-between; height: 61px; padding: 0 6px 0 6px; font-size: 34px; line-height: 54px; color: #de2f2f; }
.shares span:first-child { color: #149314; }
.level2 { display: flex; align-items: center; justify-content: center; gap: 14px; width: calc(100% - 6px); height: 60px; margin: 4px 0 0 6px; background: linear-gradient(100deg, #fb685d, #e93828); color: #fff; font-size: 38px; line-height: 60px; }
.level2 svg { width: 28px; }

.decide { padding: 26px 28px 0; }
h2 { position: relative; margin: 0 0 15px; font-size: 47px; line-height: 60px; font-weight: 900; }
h2 svg { position: absolute; left: 10px; top: 9px; width: 18px; }
.tools { display: flex; gap: 17px; margin-right: -28px; overflow: hidden; }
.tools button { display: flex; align-items: center; gap: 12px; flex: none; height: 66px; padding: 0 22px; border: 1px solid #ccc; border-radius: 12px; font-size: 34px; line-height: 62px; white-space: nowrap; }
.tools .on { border-color: #d9393f; color: #d9393f; }
.tools svg { width: 26px; }
.report { display: flex; align-items: center; height: 113px; margin-top: 25px; padding: 0 40px 0 34px; border-radius: 18px; background: #f4f4f4; font-size: 39px; }
.cal { position: relative; width: 78px; margin-right: 28px; text-align: center; }
.cal b, .cal i { display: block; font-weight: 900; font-style: italic; font-size: 36px; line-height: 36px; }
.cal i { border-radius: 6px; background: #e63c41; color: #fff; font-size: 34px; }
.cal svg { position: absolute; left: 2px; top: 0; width: 40px; }
.report-text { flex: 1; padding-bottom: 4px; white-space: nowrap; }
.go { width: 18px; }

.promo { display: flex; align-items: center; height: 89px; margin-top: 24px; padding: 0 42px 0 33px; border-radius: 14px; background: #f7f7f7; color: #666; font-size: 40px; }
.promo em { width: 88px; height: 50px; margin-right: 17px; border: 2px solid #d9393f; border-radius: 6px; color: #d9393f; font-size: 32px; line-height: 46px; text-align: center; }
.promo a { flex: 1; padding-bottom: 4px; white-space: nowrap; }
.promo svg { width: 40px; }

.actions { display: flex; gap: 11px; margin-top: 16px; padding-left: 34px; }
.index { width: 258px; white-space: nowrap; padding-top: 11px; }
.idx-top { display: flex; align-items: center; justify-content: space-between; padding-right: 6px; }
.idx-top strong { font-size: 50px; line-height: 54px; font-weight: 500; color: #e23a40; }
.idx-top svg { width: 26px; }
.idx-sub { display: flex; justify-content: space-between; padding-right: 4px; font-size: 32px; line-height: 46px; }
.act { flex: 1; height: 126px; border-radius: 14px; font-size: 54px; line-height: 126px; font-weight: 500; }
.buy { background: #fde2e3; color: #e03b40; }
.sell { background: #e6edf9; color: #5c85d0; }
.undo { background: #f1f1f1; color: #555; }
.more { width: 134px; display: flex; align-items: center; padding-left: 21px; }
.more svg { width: 58px; }
.home { width: 35%; height: 12px; margin: 32px auto 18px; border-radius: 6px; background: #595959; }
</style>
